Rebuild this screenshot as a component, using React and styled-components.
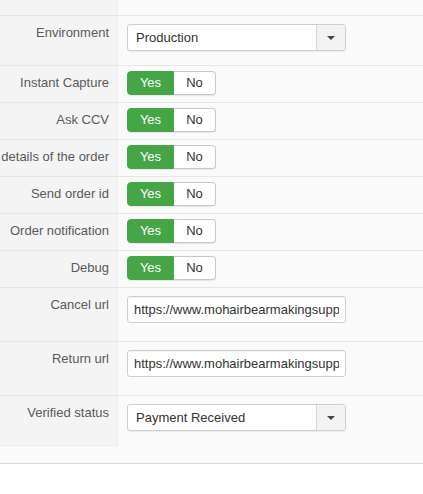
import React from 'react';
import styled, { createGlobalStyle } from 'styled-components';

const GlobalStyle = createGlobalStyle`
  html, body {
    margin: 0;
    padding: 0;
    background: #fff;
    font-family: "Liberation Sans", Arial, sans-serif;
    font-size: 13px;
  }
`;

const Panel = styled.div`
  width: 100%;
  background: #fafafa;
  border-bottom: 1px solid #d9d9d9;
  padding-bottom: 17px;
`;

const Row = styled.div`
  display: flex;
  box-sizing: border-box;
  height: ${p => p.h}px;
  border-bottom: ${p => (p.last ? 'none' : '1px solid #e6e6e6')};
`;

const Label = styled.div`
  width: 118px;
  flex-shrink: 0;
  box-sizing: border-box;
  background: #f4f4f4;
  border-right: 1px solid #ebebeb;
  border-bottom: ${p => (p.last ? '1px solid #ebebeb' : 'none')};
  text-align: right;
  padding: 8px 8px 0 0;
  line-height: 18px;
  color: #5a5a5a;
  white-space: nowrap;
`;

const Field = styled.div`
  flex: 1;
  padding: ${p => p.pt}px 0 0 9px;
`;

const SelectBox = styled.div`
  display: flex;
  width: 219px;
  height: 27px;
  box-sizing: border-box;
  background: #fff;
  border: 1px solid #cfcfcf;
  border-radius: 3px;
  box-shadow: 0 1px 1px rgba(0, 0, 0, 0.06);
`;

const SelectText = styled.div`
  flex: 1;
  padding-left: 8px;
  line-height: 25px;
  color: #333;
`;

const SelectArrow = styled.div`
  width: 28px;
  border-left: 1px solid #d5d5d5;
  background: #f3f3f3;
  display: flex;
  align-items: center;
  justify-content: center;
  border-radius: 0 3px 3px 0;
  &::after {
    content: '';
    border-left: 4px solid transparent;
    border-right: 4px solid transparent;
    border-top: 4px solid #444;
  }
`;

const Toggle = styled.div`
  display: flex;
  height: 24px;
`;

const ToggleBtn = styled.div`
  width: ${p => p.w}px;
  box-sizing: border-box;
  line-height: 22px;
  text-align: center;
  color: ${p => (p.active ? '#fff' : '#333')};
  background: ${p => (p.active ? '#46a546' : '#fff')};
  border: 1px solid ${p => (p.active ? '#46a546' : '#c8c8c8')};
  border-left: ${p => (p.active ? undefined : 'none')};
  border-radius: ${p => (p.active ? '4px 0 0 4px' : '0 4px 4px 0')};
  box-shadow: 0 1px 1px rgba(0, 0, 0, 0.08);
`;

const TextInput = styled.input`
  width: 219px;
  height: 27px;
  box-sizing: border-box;
  border: 1px solid #cfcfcf;
  border-radius: 3px;
  padding: 0 6px;
  font-family: inherit;
  font-size: 13px;
  color: #333;
  background: #fff;
  outline: none;
  box-shadow: inset 0 1px 1px rgba(0, 0, 0, 0.04);
`;

const Select = ({ value }) => (
  <SelectBox>
    <SelectText>{value}</SelectText>
    <SelectArrow />
  </SelectBox>
);

const YesNo = () => (
  <Toggle>
    <ToggleBtn active w={47}>Yes</ToggleBtn>
    <ToggleBtn w={42}>No</ToggleBtn>
  </Toggle>
);

const toggles = [
  'Instant Capture',
  'Ask CCV',
  'details of the order',
  'Send order id',
  'Order notification',
  'Debug',
];

const url = 'https://www.mohairbearmakingsupplies.co.uk/index.php?option=com_virtuemart';

export default function App() {
  return (
    <>
      <GlobalStyle />
      <Panel>
        <Row h={16}>
          <Label />
          <Field pt={0} />
        </Row>
        <Row h={50}>
          <Label>Environment</Label>
          <Field pt={8}>
            <Select value="Production" />
          </Field>
        </Row>
        {toggles.map(t => (
          <Row h={37} key={t}>
            <Label>{t}</Label>
            <Field pt={5}>
              <YesNo />
            </Field>
          </Row>
        ))}
        <Row h={54}>
          <Label>Cancel url</Label>
          <Field pt={8}>
            <TextInput readOnly value={url} />
          </Field>
        </Row>
        <Row h={54}>
          <Label>Return url</Label>
          <Field pt={8}>
            <TextInput readOnly value={url} />
          </Field>
        </Row>
        <Row h={50} last>
          <Label last>Verified status</Label>
          <Field pt={8}>
            <Select value="Payment Received" />
          </Field>
        </Row>
      </Panel>
    </>
  );
}
